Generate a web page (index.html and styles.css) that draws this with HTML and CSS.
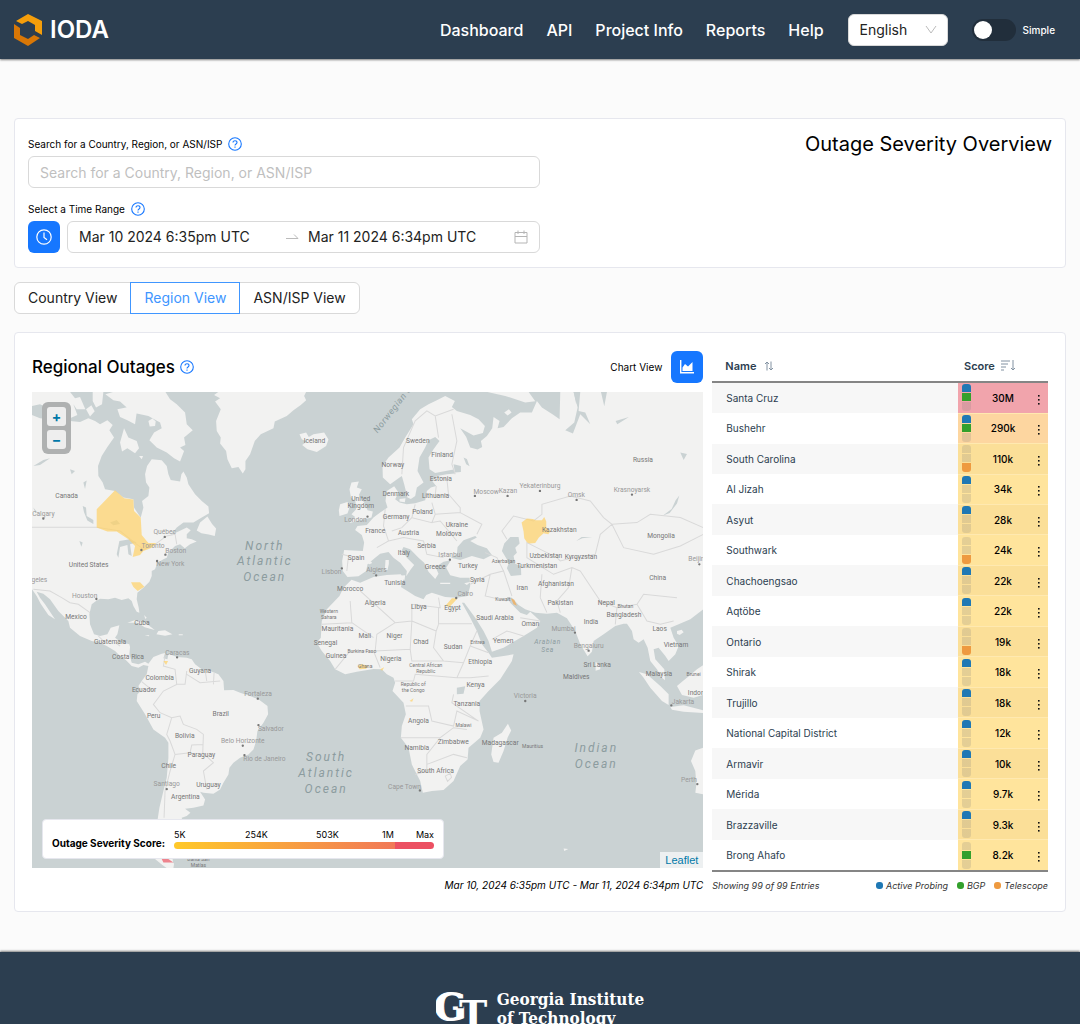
FILE: index.html
```html
<!DOCTYPE html>
<html lang="en">
<head>
<meta charset="utf-8">
<meta name="viewport" content="width=device-width, initial-scale=1">
<title>IODA | Outage Severity Overview</title>
<link rel="stylesheet" href="styles.css">
</head>
<body>
<svg class="defs" aria-hidden="true">
  <symbol id="help" viewBox="0 0 14 14"><circle cx="7" cy="7" r="6.3" fill="none" stroke="#1677ff" stroke-width="1.1"/><path d="M5 5.6c0-2.5 4-2.5 4 0C9 7 7 7 7 8.5M7 9.6v1.1" fill="none" stroke="#1677ff" stroke-width="1.1"/></symbol>
  <symbol id="dots" viewBox="0 0 4 12"><rect x="1" y="1" width="1.600" height="1.600"/><rect x="1" y="5" width="1.600" height="1.600"/><rect x="1" y="9" width="1.600" height="1.600"/></symbol>
</svg>

<header class="header">
  <a class="brand" href="#">
    <svg class="brand-mark" viewBox="0 0 28 32"><path fill="#f59e0b" d="M2 7 14 0l14 7v14l-7-4v-6l-7-4-6 3z"/><path fill="#d97706" d="M0 10l6 4v7l8 4 6-4 6 3-12 8L0 24z"/></svg>
    <span>IODA</span>
  </a>
  <nav class="nav">
    <a href="#">Dashboard</a><a href="#">API</a><a href="#">Project Info</a><a href="#">Reports</a><a href="#">Help</a>
  </nav>
  <div class="lang">
    <select aria-label="Language"><option>English</option></select>
    <svg class="chevron" viewBox="0 0 12 10"><path d="M1 1l5 7 5-7" fill="none" stroke="#bbb"/></svg>
  </div>
  <label class="mode"><input type="checkbox" role="switch"><span>Simple</span></label>
</header>

<main class="main">
  <section class="panel search">
    <div class="search-form">
      <div class="label-row"><label for="q">Search for a Country, Region, or ASN/ISP</label><svg class="help"><use href="#help"/></svg></div>
      <input class="field" id="q" type="text" placeholder="Search for a Country, Region, or ASN/ISP">
      <div class="label-row second"><label for="from">Select a Time Range</label><svg class="help"><use href="#help"/></svg></div>
      <div class="range-row">
        <button class="icon-btn" type="button" aria-label="Relative time"><svg width="16" height="16" viewBox="0 0 16 16" fill="none" stroke="#fff" stroke-width="1.2"><circle cx="8" cy="8" r="7.2"/><path d="M8 3.5V8.5l3 2.2"/></svg></button>
        <div class="field range">
          <input id="from" type="text" value="Mar 10 2024 6:35pm UTC">
          <svg width="14" height="14" viewBox="0 0 14 14"><path d="M1 8.500h12L9 4.500" fill="none" stroke="#bbb"/></svg>
          <input type="text" aria-label="End time" value="Mar 11 2024 6:34pm UTC">
          <svg width="14" height="14" viewBox="0 0 14 14" fill="none" stroke="#b5b5b5"><path d="M1 2.500h12v10.500H1zM1 6.500h12M4 .5v3.500M10 .5v3.500"/></svg>
        </div>
      </div>
    </div>
    <h1>Outage Severity Overview</h1>
  </section>

  <div class="tabs">
    <button type="button">Country View</button><button type="button" class="active">Region View</button><button type="button">ASN/ISP View</button>
  </div>

  <section class="panel outages">
    <div class="map-col">
      <div class="map-head">
        <h2>Regional Outages</h2><svg class="help"><use href="#help"/></svg>
        <label for="chart">Chart View</label>
        <button class="icon-btn" id="chart" type="button"><svg width="14" height="14" viewBox="0 0 14 14" fill="#fff"><path d="M0 0h1.400v12H14v1.400H0zM2.500 11V7.500L5 4l3 2.500L12.500 2v9z"/></svg></button>
      </div>
      <div class="map">
        <svg class="world" viewBox="36 153 2013 1428" preserveAspectRatio="xMidYMid slice">
          <g class="land">
            <path d="M36 222L60 232 90 235 120 245 150 240 180 243 205 232 225 240 240 250 262 238 278 252 268 268 282 290 262 318 245 345 234 375 235 405 248 425 255 445 285 450 310 470 340 475 342 500 355 520 362 530 370 500 366 480 385 465 388 440 378 425 375 400 381 375 395 355 425 358 440 375 445 400 452 417 480 422 484 400 490 392 500 410 505 430 525 460 545 480 565 497 567 517 545 530 520 545 490 545 470 560 452 582 475 572 500 560 512 568 500 580 500 592 515 595 530 602 510 610 494 622 480 610 465 615 445 635 440 650 430 655 412 665 405 685 395 690 395 705 388 722 370 740 352 755 350 775 356 800 358 815 350 812 340 795 335 780 325 772 305 777 285 770 265 775 240 773 228 780 215 790 208 820 210 850 222 880 240 885 262 880 272 860 298 853 292 880 285 890 302 903 328 910 330 918 328 940 335 965 355 970 375 962 385 968 400 948 425 938 435 936 430 952 442 955 445 938 470 948 500 950 515 955 525 970 545 985 570 990 595 1000 610 1020 612 1048 640 1047 660 1055 690 1065 715 1075 742 1095 744 1120 730 1145 712 1170 708 1200 700 1225 685 1240 660 1250 640 1265 628 1280 625 1300 610 1325 600 1345 580 1358 550 1355 540 1352 555 1375 550 1393 520 1400 495 1403 511 1415 500 1425 485 1430 488 1445 450 1500 460 1570 440 1560 415 1500 412 1440 418 1400 430 1350 440 1310 445 1250 445 1205 435 1190 400 1165 375 1120 350 1080 352 1060 362 1050 355 1035 365 1020 380 1000 385 975 370 972 355 980 335 975 318 958 300 945 285 930 260 915 240 905 215 900 180 885 150 860 145 840 115 810 90 775 70 758 50 752 60 770 75 790 105 835 85 822 62 788 50 765 36 745z"/>
            <path d="M36 153H150L165 172 180 168 196 205 170 205 160 190 172 222 150 232 120 210 92 205 60 190 36 195zM218 153H250L246 190 228 200 218 180zM256 160L280 153H436L450 175 470 190 495 215 500 250 518 268 492 290 496 312 480 320 492 330 480 362 462 352 440 335 410 320 388 298 402 275 425 262 420 245 385 225 350 218 320 200 300 182 280 178zM292 205L340 195 350 215 345 250 322 238 300 228zM300 305L312 262 325 290 350 300 357 322 345 337 322 322 306 332zM385 240l12-7 10 8-2 14-16 2zM357 345l12 0-4 10zM198 205l16-12 10 18-14 16z"/>
            <path d="M595 153L582 162 600 172 585 182 602 205 588 240 590 270 602 290 600 308 618 330 622 355 635 382 655 378 668 398 676 385 676 360 690 340 704 300 722 280 760 262 764 242 800 225 820 208 842 192 858 178 852 165 858 153z"/>
            <path d="M838 280L858 275 866 288 880 280 912 275 925 296 918 315 890 333 862 325 846 312 860 302 845 295z"/>
            <path d="M540 545l22-18 14 22 12 14-4 22-18-4-22-4-14-8z"/>
            <path d="M322 845l24-8 30 8 28 22-30-8-22-14zM372 822l8 8-4 4zM415 870l20-2 22 12-22 4-26-4zM374 882l14 1-2 3zM476 880l12 0 0 3-12 0z"/>
            <path d="M405 1554H436L462 1567 460 1581H440L425 1570 415 1562z"/>
          </g>
          <g class="land" transform="translate(1020 0)">
            <path d="M1029 153H740L732 196 722 153H655L648 190 640 153H600L598 235 580 222 545 200 530 180 515 215 480 215 455 232 430 258 412 262 418 240 400 228 396 262 380 285 362 300 366 318 352 326 330 320 318 288 300 262 340 284 368 276 374 255 355 235 330 222 290 210 275 198 284 180 255 165 230 178 205 190 180 205 155 235 160 250 135 290 118 320 85 350 67 375 68 410 90 430 115 412 125 405 132 430 142 470 152 474 165 465 170 440 190 425 172 390 178 350 195 320 205 298 225 288 238 300 220 325 205 350 208 385 225 396 280 386 285 398 260 400 230 405 216 420 228 435 212 440 200 450 195 478 165 487 140 490 118 485 105 475 115 455 102 436 80 450 76 480 82 500 60 515 40 530 20 552 -8 555 -15 567 5 582 12 605 8 630 -48 627 -54 660 -52 690 -38 708 -5 706 18 690 22 670 45 650 60 638 85 633 100 650 120 665 140 690 138 706 152 685 162 672 140 650 125 628 130 618 150 625 175 650 192 665 205 692 225 714 235 698 226 678 250 662 272 658 258 680 270 703 300 710 328 710 330 735 322 765 290 770 255 768 215 755 198 762 190 775 165 765 145 752 122 738 130 715 122 700 80 702 40 708 0 725 -26 716 -50 740 -62 765 -100 805 -115 840 -118 890 -130 905 -115 930 -90 960 -75 985 -45 1000 -10 992 40 984 65 985 80 1000 100 1010 105 1025 97 1050 130 1085 137 1120 125 1155 122 1190 145 1220 155 1270 180 1320 188 1355 215 1350 250 1347 280 1320 300 1275 322 1255 325 1220 360 1190 370 1165 358 1110 358 1080 385 1050 420 1015 455 960 460 940 430 945 395 950 385 935 365 910 350 870 330 830 305 785 312 785 345 830 370 870 385 900 395 932 430 920 490 885 530 860 540 840 510 812 500 822 480 815 465 800 450 785 440 768 455 770 475 792 495 805 525 815 560 818 590 815 620 832 645 870 660 910 682 946 695 932 700 900 730 880 765 855 790 848 800 848 815 870 820 895 835 905 850 895 862 920 870 960 890 985 905 1010 914 1018 912 985 885 955 880 925 895 920 915 945 925 960 945 940 955 915 940 890 930 860 955 850 990 835 1029 805z"/>
            <path d="M-26 425L-4 422-10 440 5 445 -4 462 14 488 22 508 38 512 34 530 0 538-32 546-15 528-26 520-12 505-14 482-28 468-32 445zM-60 490L-38 483-32 500-38 518-62 525-64 508zM118 474l18-2-2 12-16-2zM432 215l14-10 8 10-12 9zM22 667l10-6 4 5-8 4zM76 657h10v12l-4 18h-8zM105 705l30-2-2 14zM240 725h30v4h-30zM312 727l20-5-12 10zM380 153h125l20 28-30 4-60-20z"/>
            <path d="M443 1148L453 1168 442 1190 430 1230 415 1265 400 1263 393 1240 400 1190 425 1175zM706 963l14 8 0 14-14 4zM836 993L860 1000 900 1035 925 1060 925 1092 905 1080 870 1040 850 1010zM930 1098L970 1093 1029 1108V1116L970 1112 935 1106zM950 1035L965 1022 990 1002 1010 985 1029 972V1062L1000 1070 965 1062zM1029 1220L1005 1228 992 1260 1005 1290 1008 1330 1005 1355 1029 1360zM950 870l14-4 6 8-12 8-8-4zM610 1522l14 2-12 6z"/>
          </g>
          <g class="water">
            <path d="M298 600L330 595 350 605 330 610 335 645 325 640 322 612 300 618 295 650 290 640zM188 495l10 5 2 25 20 12 0 12-18-10-10-25zM40 375l30-18 20-5-30 20zM70 320l20-15 12 8-20 8zM150 385l15 5-10 10zM190 425l10-6-5 25zM178 600l10 5-4 12zM270 545l20-8 10 12-20 4zM40 500l10 12-4 4z"/>
            <g transform="translate(1020 0)"><path d="M290 640L292 618 310 598 345 585 350 590 330 600 352 612 380 622 395 642 370 655 335 645 300 657 272 650zM432 608L450 588 475 588 478 608 465 620 470 635 460 645 465 668 482 675 483 702 452 705 440 682 446 665 425 630zM640 153L652 200 642 245 615 268 638 278 660 220 690 250 675 215 655 210 660 153zM908 524L928 516 950 488 957 464 946 478 934 504zM648 600l16-12 32 0-30 4zM280 370l22 5 0 18-18 2zM310 350l10 4 8 22-10-6zM960 335l20 4-10 18zM766 240l40-12-35 22zM290 1040l25-4-5 22-20 2z"/></g>
          </g>
          <g class="borders">
            <path d="M36 559H230L300 570 350 610 372 625 405 610 440 585 465 580 470 610M40 745L90 750 125 770 150 785 175 790 210 815M235 885L255 905M285 905L300 915M435 945L430 975 465 985 470 1030 430 1050 400 1090 420 1115 455 1130 480 1125 490 1150 530 1165 550 1180 548 1235 580 1265 550 1290 560 1345M455 1130L440 1180 450 1200 465 1240 510 1235 515 1212 548 1210M465 1240L450 1290 435 1350 432 1430M470 1030L495 1030 500 990M500 1000L540 1025 600 1020M365 1022L400 1050M555 985L560 1020M582 995L580 1030M965 640L985 645 980 690"/>
            <path transform="translate(1020 0)" d="M125 400L130 320 165 240 200 210 225 225 280 205M225 225L235 290M275 220L290 300 275 370 285 400M225 405L260 415 265 460 225 465 228 435M265 460L300 500 300 515 225 520 215 485M300 515L365 550 350 580M165 490L155 530 215 545 225 520M75 505L70 555 85 600 50 620M155 530L125 560 95 570M215 545L240 540 290 600M85 600L130 590 190 600 200 640 250 650M375 635L410 650 430 690 M330 730L390 700 430 690 455 765M390 700L375 765 440 780M440 595L425 570 460 525 520 540 545 520 545 490 630 465 690 480 730 530 755 550 720 580 705 640 660 650 640 650 600 660 590 650 530 620 500 605 500 650 580 700 635 680 660 690M755 550L830 545 870 520 960 530 1029 560M755 550L790 620 880 640 960 615 1029 580M545 700L540 770 560 815M635 680L625 740 590 780 600 815M660 690L720 780 770 800 830 790 850 760 950 770M770 800L765 850M830 790L860 840 900 850 940 840M0 750L105 845 155 840 155 790 240 800 235 770M235 848H335M235 800V850M155 840L228 870 235 850M228 870L220 920 250 960 310 965 330 915 350 870M105 845L50 880 45 930 150 925 155 840M330 915L385 935M310 965L290 1010 330 1010 385 1005M-115 850L-25 845-30 780M-25 845L40 890M-75 985L-30 930 40 930 60 980M150 925L155 960 250 960M105 1020H160L165 1000 290 1010M280 1060L275 1085 355 1140M137 1095H205L215 1140 280 1155 290 1110 355 1140M122 1190H240L280 1160 320 1165M240 1190L200 1240 200 1290 165 1300M200 1270L280 1240 320 1250M255 1305l15-8 4 12-12 12zM395 895L440 870 490 885M540 840L480 830"/>
          </g>
          <g class="regions">
            <path d="M285 448L312 472 340 476 342 510 362 530 365 582 385 606 408 606 395 620 370 630 360 642 338 648 345 615 325 595 290 572 262 572 230 560V505zM333 724H360L373 737 353 750 340 738zM430 960l14 0-6 12z"/>
            <path transform="translate(1020 0)" d="M484 545L500 533 518 534 526 538 545 538 552 528 558 542 558 560 570 572 564 580 550 577 536 590 525 606 508 608 500 604 492 592 490 572zM255 795L275 772 292 772 280 785 268 797zM-8 975l12-6 20 6-6 8-20 2zM60 985l12-6-6 10zM148 1080l12-8-4 10z"/>
            <path class="mid" transform="translate(1020 0)" d="M452 772l10 4 8 18-10-4z"/>
            <path class="high" d="M425 1554H445L460 1564H430z"/>
          </g>
          <g class="places">
            <text x="140" y="471">Canada</text><text x="206" y="677">United States</text><text x="168" y="833">Mexico</text><text x="366" y="851">Cuba</text><text x="270" y="909">Guatemala</text><text x="324" y="955">Costa Rica</text><text x="540" y="995">Guyana</text><text x="419" y="1017">Colombia</text><text x="372" y="1053">Ecuador</text><text x="602" y="1125">Brazil</text><text x="401" y="1130">Peru</text><text x="494" y="1190">Bolivia</text><text x="544" y="1247">Paraguay</text><text x="446" y="1280">Chile</text><text x="565" y="1339">Uruguay</text><text x="496" y="1375">Argentina</text><text x="883" y="307">Iceland</text><text x="1022" y="479">United</text><text x="1022" y="501">Kingdom</text><text x="1008" y="656">Spain</text><text x="990" y="751">Morocco</text><text class="small" x="926" y="817">Western</text><text class="small" x="926" y="835">Sahara</text><text x="952" y="871">Mauritania</text><text x="916" y="911">Senegal</text><text x="948" y="951">Guinea</text><text class="small" x="535" y="1560">Bahía San</text><text class="small" x="535" y="1578">Matías</text>
            <g transform="translate(1020 0)"><text x="173" y="307">Sweden</text><text x="246" y="349">Finland</text><text x="98" y="378">Norway</text><text x="242" y="421">Estonia</text><text x="107" y="465">Denmark</text><text x="226" y="472">Lithuania</text><text x="187" y="520">Poland</text><text x="108" y="534">Germany</text><text x="290" y="558">Ukraine</text><text x="45" y="577">France</text><text x="145" y="581">Austria</text><text x="266" y="586">Moldova</text><text x="199" y="622">Serbia</text><text x="131" y="643">Italy</text><text x="225" y="685">Greece</text><text x="323" y="681">Turkey</text><text class="small" x="430" y="666">Azerbaijan</text><text x="351" y="723">Syria</text><text x="104" y="733">Tunisia</text><text x="486" y="748">Iran</text><text x="530" y="680">Turkmenistan</text><text x="557" y="651">Uzbekistan</text><text x="662" y="653">Kyrgyzstan</text><text x="597" y="573">Kazakhstan</text><text x="848" y="364">Russia</text><text x="902" y="590">Mongolia</text><text x="892" y="718">China</text><text x="587" y="736">Afghanistan</text><text x="600" y="792">Pakistan</text><text x="738" y="791">Nepal</text><text class="small" x="795" y="800">Bhutan</text><text x="791" y="828">Bangladesh</text><text x="692" y="848">India</text><text x="898" y="869">Laos</text><text x="947" y="919">Vietnam</text><text x="711" y="978">Sri Lanka</text><text x="648" y="1015">Maldives</text><text x="896" y="1005">Malaysia</text><text class="small" x="1000" y="1004">Brunei</text><text x="1026" y="1062">Indonesia</text><text x="45" y="793">Algeria</text><text x="176" y="804">Libya</text><text x="277" y="808">Egypt</text><text class="small" x="428" y="781">Kuwait</text><text x="404" y="837">Saudi Arabia</text><text x="510" y="856">Oman</text><text x="429" y="905">Yemen</text><text x="14" y="892">Mali</text><text x="103" y="891">Niger</text><text x="182" y="910">Chad</text><text x="279" y="924">Sudan</text><text class="small" x="352" y="908">Eritrea</text><text class="small" x="5" y="937">Burkina Faso</text><text x="92" y="961">Nigeria</text><text x="360" y="969">Ethiopia</text><text class="small" x="197" y="977">Central African</text><text class="small" x="197" y="995">Republic</text><text class="small" x="15" y="982">Ghana</text><text class="small" x="159" y="1036">Republic of</text><text class="small" x="159" y="1054">the Congo</text><text x="346" y="1039">Kenya</text><text x="320" y="1096">Tanzania</text><text x="175" y="1147">Angola</text><text class="small" x="310" y="1157">Malawi</text><text x="279" y="1210">Zimbabwe</text><text x="170" y="1228">Namibia</text><text x="226" y="1296">South Africa</text><text x="420" y="1212">Madagascar</text><text class="small" x="517" y="1220">Mauritius</text></g>
            <g class="cities"><text x="70" y="526">Calgary</text><text x="434" y="580">Québec</text><text x="399" y="621">Toronto</text><text x="467" y="637">Boston</text><text x="451" y="676">New York</text><text x="58" y="724">geles</text><text x="194" y="771">Houston</text><text x="472" y="943">Caracas</text><text x="714" y="1065">Fortaleza</text><text x="752" y="1170">Salvador</text><text x="668" y="1206">Belo Horizonte</text><text x="733" y="1259">Rio de Janeiro</text><text x="440" y="1336">Santiago</text><text x="1006" y="543">London</text><text x="934" y="700">Lisbon</text>
            <g transform="translate(1020 0)"><text x="378" y="460">Moscow</text><text x="443" y="457">Kazan</text><text x="539" y="441">Yekaterinburg</text><text x="648" y="469">Omsk</text><text x="815" y="454">Krasnoyarsk</text><text x="270" y="649">Istanbul</text><text x="49" y="694">Algiers</text><text x="315" y="766">Cairo</text><text x="1014" y="660">Beijing</text><text x="610" y="871">Mumbai</text><text x="685" y="921">Bengaluru</text><text x="495" y="1072">Victoria</text><text x="968" y="1089">Jakarta</text><text x="133" y="1344">Cape Town</text><text x="986" y="1324">Perth</text></g></g>
          </g>
          <path class="pins" d="M70 533h.1M434 588h.1M364 627h.1M436 641h.1M411 660h.1M229 774h.1M471 949h.1M713 1073h.1M715 1152h.1M668 1214h.1M673 1242h.1M440 1344h.1M1042 527h.1M965 682h.1M1364 465h.1M1462 465h.1M1559 450h.1M1669 477h.1M1835 461h.1M1289 656h.1M1068 703h.1M1308 771h.1M2037 670h.1M1664 875h.1M1705 929h.1M1515 1080h.1M1953 1093h.1M1199 1348h.1M2031 1329h.1"/>
          <g class="oceans">
            <text x="734" y="626">North</text><text x="734" y="673">Atlantic</text><text x="734" y="720">Ocean</text>
            <text x="918" y="1261">South</text><text x="918" y="1308">Atlantic</text><text x="918" y="1355">Ocean</text>
            <text x="1728" y="1234">Indian</text><text x="1728" y="1281">Ocean</text>
            <text class="sea" x="1582" y="909">Arabian</text><text class="sea" x="1582" y="933">Sea</text>
            <text class="norw" transform="translate(1072 278) rotate(-52)">Norwegian Sea</text>
          </g>
        </svg>
        <div class="zoom"><button type="button" aria-label="Zoom in">+</button><button type="button" aria-label="Zoom out">−</button></div>
        <div class="legend">
          <strong>Outage Severity Score:</strong>
          <div class="scale"><div class="ticks"><span>5K</span><span>254K</span><span>503K</span><span>1M</span><span>Max</span></div><div class="bar"></div></div>
        </div>
        <a class="leaflet" href="#">Leaflet</a>
      </div>
      <p class="period">Mar 10, 2024 6:35pm UTC - Mar 11, 2024 6:34pm UTC</p>
    </div>

    <div class="table-col">
      <table>
        <colgroup><col><col class="c-src"><col class="c-score"><col class="c-more"></colgroup>
        <thead><tr><th class="name">Name <svg class="sort" viewBox="0 0 10 10"><path d="M3 9.500V1M1 3l2-2 2 2M7 .5V9M5 7l2 2 2-2"/></svg></th><th class="score" colspan="3">Score <svg class="sort wide" viewBox="0 0 15 11"><path d="M0 1h9M0 4h7M0 7h5M0 10h3M12 0v10M10 8l2 2 2-2"/></svg></th></tr></thead>
        <tbody>
          <tr class="red"><td>Santa Cruz</td><td><i class="src p g"></i></td><td>30M</td><td><svg class="more"><use href="#dots"/></svg></td></tr>
          <tr class="orange"><td>Bushehr</td><td><i class="src p g"></i></td><td>290k</td><td><svg class="more"><use href="#dots"/></svg></td></tr>
          <tr><td>South Carolina</td><td><i class="src t"></i></td><td>110k</td><td><svg class="more"><use href="#dots"/></svg></td></tr>
          <tr><td>Al Jizah</td><td><i class="src p"></i></td><td>34k</td><td><svg class="more"><use href="#dots"/></svg></td></tr>
          <tr><td>Asyut</td><td><i class="src p"></i></td><td>28k</td><td><svg class="more"><use href="#dots"/></svg></td></tr>
          <tr><td>Southwark</td><td><i class="src t"></i></td><td>24k</td><td><svg class="more"><use href="#dots"/></svg></td></tr>
          <tr><td>Chachoengsao</td><td><i class="src p"></i></td><td>22k</td><td><svg class="more"><use href="#dots"/></svg></td></tr>
          <tr><td>Aqtöbe</td><td><i class="src p"></i></td><td>22k</td><td><svg class="more"><use href="#dots"/></svg></td></tr>
          <tr><td>Ontario</td><td><i class="src t"></i></td><td>19k</td><td><svg class="more"><use href="#dots"/></svg></td></tr>
          <tr><td>Shirak</td><td><i class="src p"></i></td><td>18k</td><td><svg class="more"><use href="#dots"/></svg></td></tr>
          <tr><td>Trujillo</td><td><i class="src p"></i></td><td>18k</td><td><svg class="more"><use href="#dots"/></svg></td></tr>
          <tr><td>National Capital District</td><td><i class="src p"></i></td><td>12k</td><td><svg class="more"><use href="#dots"/></svg></td></tr>
          <tr><td>Armavir</td><td><i class="src p"></i></td><td>10k</td><td><svg class="more"><use href="#dots"/></svg></td></tr>
          <tr><td>Mérida</td><td><i class="src p"></i></td><td>9.7k</td><td><svg class="more"><use href="#dots"/></svg></td></tr>
          <tr><td>Brazzaville</td><td><i class="src p"></i></td><td>9.3k</td><td><svg class="more"><use href="#dots"/></svg></td></tr>
          <tr><td>Brong Ahafo</td><td><i class="src g"></i></td><td>8.2k</td><td><svg class="more"><use href="#dots"/></svg></td></tr>
        </tbody>
      </table>
      <div class="table-foot"><span class="count">Showing 99 of 99 Entries</span><span class="key probing">Active Probing</span><span class="key bgp">BGP</span><span class="key telescope">Telescope</span></div>
    </div>
  </section>
</main>

<footer class="footer">
  <a class="gt" href="#"><svg class="gt-mark" viewBox="0 0 56 44"><text x="-2" y="30">G</text><text class="gt-t" x="23" y="37">T</text></svg><span>Georgia Institute<br>of Technology</span></a>
</footer>
</body>
</html>
```
FILE: styles.css
```css
* { box-sizing: border-box; }
body { margin: 0; background: #fbfbfb; color: #000; font-family: Inter, "Noto Sans", sans-serif; font-size: 14px; line-height: 20px; }
button, input, select { font: inherit; color: inherit; }
a { color: inherit; text-decoration: none; }
h1, h2, p { margin: 0; font-weight: 400; }
svg { display: block; flex: none; }
.defs { position: absolute; width: 0; height: 0; }

.header { display: flex; align-items: center; height: 59px; padding: 0 25px 0 14px; background: #2c3e50; color: #fff; box-shadow: 0 1px 2px rgba(0, 0, 0, .5); }
.brand { display: flex; align-items: center; gap: 8px; margin-right: auto; font-size: 24px; font-weight: 600; }
.brand-mark { width: 28px; height: 32px; }
.nav { display: flex; gap: 23px; font-size: 16px; font-weight: 500; }
.lang { position: relative; margin-left: 24px; }
.lang select { width: 100px; height: 32px; padding: 0 11px; border: 1px solid #d9d9d9; border-radius: 6px; background: #fff; color: #222; appearance: none; }
.chevron { position: absolute; top: 11px; right: 11px; width: 12px; height: 10px; pointer-events: none; }
.mode { display: flex; align-items: center; gap: 7px; margin-left: 24px; font-size: 10px; font-weight: 500; }
.mode input { width: 44px; height: 22px; margin: 0; padding: 2px; border-radius: 11px; background: #212e3b; appearance: none; }
.mode input::before { content: ""; display: block; width: 18px; height: 18px; border-radius: 50%; background: #fff; }

.main { padding: 59px 14px 40px; }
.panel { border: 1px solid #e6e7ee; border-radius: 4px; background: #fff; }
.search { display: flex; justify-content: space-between; padding: 13px 13px 14px; }
.search-form { width: 512px; }
.label-row { display: flex; align-items: center; gap: 6px; height: 24px; font-size: 10px; }
.label-row.second { margin-top: 9px; }
.help { width: 14px; height: 14px; }
.field { width: 100%; height: 32px; padding: 0 11px; border: 1px solid #d9d9d9; border-radius: 6px; background: #fff; color: #222; }
.field::placeholder { color: #bfbfbf; }
.range-row { display: flex; gap: 7px; }
.icon-btn { display: flex; flex: none; align-items: center; justify-content: center; width: 32px; height: 32px; padding: 0; border: 0; border-radius: 6px; background: #1677ff; }
.range { display: flex; flex: 1; align-items: center; gap: 9px; }
.range input { flex: 1; width: 0; padding: 0; border: 0; background: none; }
h1 { font-size: 20px; line-height: 24px; }

.tabs { display: flex; margin: 14px 0 18px; }
.tabs button { height: 32px; margin-right: -1px; padding: 0 13px; border: 1px solid #d9d9d9; background: #fff; color: #222; }
.tabs button:first-child { border-radius: 6px 0 0 6px; }
.tabs button:last-child { border-radius: 0 6px 6px 0; }
.tabs .active { position: relative; border-color: #4096ff; color: #4096ff; }

.outages { display: flex; gap: 9px; padding: 18px 17px 15px; }
.map-col { flex: 2; min-width: 0; }
.map-head { display: flex; align-items: center; gap: 5px; margin-bottom: 9px; }
.map-head label { margin: 0 4px 0 auto; font-size: 10px; }
h2 { font-size: 17px; font-weight: 500; }
.map { position: relative; height: 476px; overflow: hidden; background: #cad2d3; }
.world { width: 100%; height: 100%; }
.land { fill: #f2f2f1; }
.water { fill: #cad2d3; }
.borders { fill: none; stroke: #d9d9d9; stroke-width: 3; }
.regions { fill: #ffd166; fill-opacity: .7; }
.regions .mid { fill: #f8a84a; }
.regions .high { fill: #ec5564; }
.places { fill: #777; font-family: Roboto, sans-serif; font-size: 20px; text-anchor: middle; }
.places .small { font-size: 15px; }
.cities { fill: #999; }
.pins { fill: none; stroke: #777; stroke-width: 7; stroke-linecap: round; }
.oceans { fill: #8c9c9f; font-family: Roboto, sans-serif; font-size: 36px; font-style: italic; letter-spacing: 6px; text-anchor: middle; }
.oceans .sea { font-size: 20px; letter-spacing: 2px; }
.oceans .norw { font-size: 27px; letter-spacing: 2px; text-anchor: start; }
.zoom { position: absolute; top: 10px; left: 10px; display: grid; gap: 4px; padding: 5px; border-radius: 6px; background: #afb1b1; }
.zoom button { width: 19px; height: 19px; padding: 0; border: 0; border-radius: 3px; background: #eee; color: #0078a8; font-weight: 700; font-size: 14px; line-height: 18px; }
.legend { position: absolute; left: 10px; bottom: 9px; display: flex; align-items: flex-end; gap: 9px; padding: 8px 9px; border: 1px solid #e6e7ee; border-radius: 4px; background: #fff; font-size: 10px; line-height: 14px; }
.legend strong { font-weight: 700; }
.scale { width: 260px; }
.ticks { display: grid; grid-template-columns: 71px 71px 66px 1fr auto; font-size: 9px; }
.bar { height: 7px; margin-bottom: 1px; border-radius: 4px; background: linear-gradient(90deg, #ffc929, #f17857 85%, #ec5062 85%); }
.leaflet { position: absolute; right: 0; bottom: 0; padding: 0 5px; background: #edf0f1; color: #0078a8; font: 11px/16px "Liberation Sans", sans-serif; }
.period { margin-top: 7px; font-size: 10px; font-style: italic; text-align: right; }

.table-col { flex: 1; min-width: 0; }
table { width: 100%; height: 521px; table-layout: fixed; border-collapse: collapse; border-bottom: 2px solid #858585; color: #2c3e50; font-size: 10px; line-height: 14px; }
.c-src { width: 18px; }
.c-score { width: 54px; }
.c-more { width: 18px; }
th { height: 31px; padding: 0 0 0 13px; border-bottom: 2px solid #858585; font-size: 11px; font-weight: 600; text-align: left; white-space: nowrap; }
th.score { padding: 0 0 0 6px; }
.sort { display: inline-block; width: 10px; height: 10px; margin-left: 5px; fill: none; stroke: #8292a2; vertical-align: -1px; }
.sort.wide { width: 15px; height: 11px; margin-left: 3px; }
td { padding: 0; }
td:first-child { padding-left: 14px; }
tbody tr:nth-child(odd) { background: #f7f7f7; }
td:nth-child(n+2) { background: #ffe49c; color: #000; border-top: 1px solid #ffe9b0; font-weight: 500; text-align: center; }
tr:nth-child(odd) td:nth-child(n+2) { background: #fbdf98; }
tr.red td:nth-child(n+2) { background: #f1a4ac; }
tr.orange td:nth-child(n+2) { background: #fdd6a0; }
.src { --a: rgba(120, 120, 120, .2); --b: var(--a); --c: var(--a); display: block; width: 9px; height: 27px; margin: 0 auto; border-radius: 3px; background: linear-gradient(var(--a) 8px, transparent 8px 9px, var(--b) 9px 17px, transparent 17px 18px, var(--c) 18px); }
.src.p { --a: #1f78b4; --b: rgba(120, 120, 120, .2); --c: rgba(120, 120, 120, .2); }
.src.g { --b: #33a02c; }
.src.t { --c: #ee9a40; }
.more { width: 4px; height: 12px; margin: 4px auto 0; fill: #111; }
.table-foot { display: flex; gap: 9px; margin-top: 4px; color: #333; font-size: 9px; font-style: italic; white-space: nowrap; }
.count { margin-right: auto; }
.key::before { content: ""; display: inline-block; width: 7px; height: 7px; margin-right: 3px; border-radius: 3px; background: #1f78b4; }
.key.bgp::before { background: #33a02c; }
.key.telescope::before { background: #ee9a40; }

.footer { display: flex; justify-content: center; padding: 38px 14px; background: #2c3e50; color: #fff; box-shadow: 0 -1px 2px rgba(0, 0, 0, .5); }
.gt { display: flex; gap: 5px; font-family: "DejaVu Serif Condensed", "DejaVu Serif", serif; font-size: 17px; font-weight: 700; line-height: 19px; }
.gt-mark { width: 56px; height: 44px; fill: #fff; stroke: #fff; stroke-width: 1px; font-family: "DejaVu Serif", serif; font-size: 38px; }
.gt-t { stroke: #2c3e50; stroke-width: 3px; paint-order: stroke; }
```
